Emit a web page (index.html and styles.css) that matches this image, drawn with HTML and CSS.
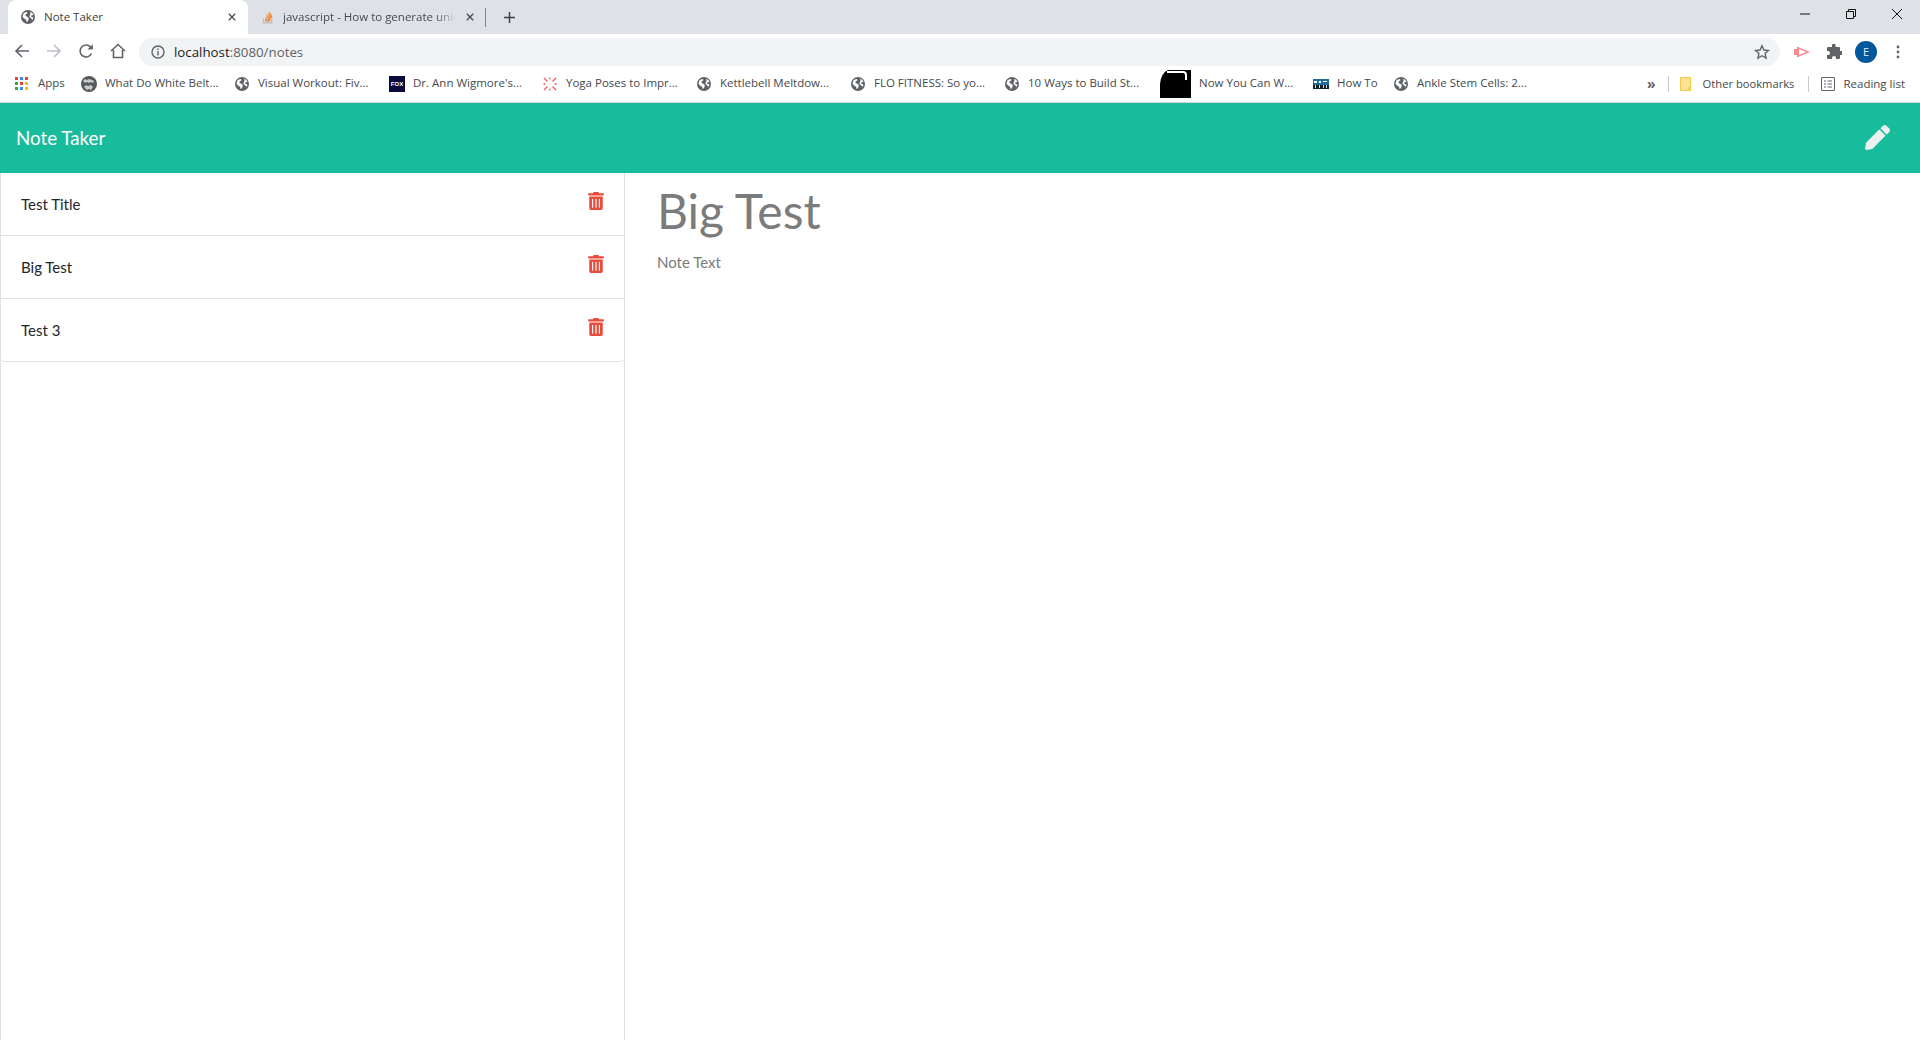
FILE: index.html
```html
<!DOCTYPE html>
<html lang="en">
<head>
    <meta charset="UTF-8">
    <meta name="viewport" content="width=device-width, initial-scale=1.0">
    <title>Note Taker</title>
    <link rel="stylesheet" href="styles.css">
</head>
<body>
    <svg class="defs" width="0" height="0">
        <symbol id="globe" viewBox="0 0 16 16">
            <circle cx="8" cy="8" r="8" fill="#5f6368"/>
            <path fill="#fff" d="M3 3.500 6.500 2.200l1 1.300-2 1.700-.5 1.500 2.500 1.200L9 9.500l-.7 2.500-1.800 2-.7-3-2.300-1.200L1.700 7.600zM10.500 2l2.500 1.500 1.300 2.300-2.300.2-.5 1.600 2.800 1-1.200 2.900-1.800-2.300-1.600-1.200.4-2.200L11 4.300z"/>
        </symbol>
        <symbol id="trash" viewBox="0 0 448 512">
            <path fill="currentColor" d="M32 464a48 48 0 0 0 48 48h288a48 48 0 0 0 48-48V128H32zm272-256a16 16 0 0 1 32 0v224a16 16 0 0 1-32 0zm-96 0a16 16 0 0 1 32 0v224a16 16 0 0 1-32 0zm-96 0a16 16 0 0 1 32 0v224a16 16 0 0 1-32 0zM432 32H312l-9.400-18.700A24 24 0 0 0 281.100 0H166.800a23.720 23.720 0 0 0-21.400 13.300L136 32H16A16 16 0 0 0 0 48v32a16 16 0 0 0 16 16h416a16 16 0 0 0 16-16V48a16 16 0 0 0-16-16z"/>
        </symbol>
    </svg>

    <!-- browser chrome -->
    <div class="tabstrip">
        <div class="tab tab-active">
            <svg class="fav"><use href="#globe"/></svg>
            <span class="tab-title">Note Taker</span>
            <svg class="tab-close" viewBox="0 0 10 10"><path d="M1 1l8 8M9 1l-8 8"/></svg>
        </div>
        <div class="tab">
            <svg class="fav" viewBox="0 0 14 16">
                <path fill="#bcbbbb" d="M1 10h1.400v4h8.200v-4H12v5.400H1z"/>
                <path fill="#f48024" d="M3.400 12h6.200v1.200H3.400zM3.600 10.200l6.100.6-.1 1.200-6.100-.6zM4.200 8l5.900 1.600-.3 1.200-5.900-1.600zM5.400 5.800l5.300 3-.6 1-5.300-3zM7.200 3.800l4.200 4.400-.9.8-4.200-4.400zM9.400 2.400l2.600 5.400-1.100.5-2.600-5.400z"/>
            </svg>
            <span class="tab-title tab-fade">javascript - How to generate uniq</span>
            <svg class="tab-close" viewBox="0 0 10 10"><path d="M1 1l8 8M9 1l-8 8"/></svg>
        </div>
        <div class="tab-sep"></div>
        <svg class="new-tab" viewBox="0 0 12 12"><path d="M6 0v12M0 6h12"/></svg>
        <div class="window-btns">
            <svg viewBox="0 0 10 10"><path d="M0 5h10"/></svg>
            <svg viewBox="0 0 10 10"><path d="M.5 2.500h7v7h-7zM2.500 2.500v-2h7v7h-2"/></svg>
            <svg viewBox="0 0 10 10"><path d="M0 0l10 10M10 0L0 10"/></svg>
        </div>
    </div>

    <div class="toolbar">
        <svg class="tool" viewBox="0 0 16 16"><path d="M15 8H2M8 2 2 8l6 6"/></svg>
        <svg class="tool tool-off" viewBox="0 0 16 16"><path d="M1 8h13M8 2l6 6-6 6"/></svg>
        <svg class="tool" viewBox="0 0 16 16"><path d="M13.500 10.500A6 6 0 1 1 12.400 3.800L14 5.400"/><path class="solid" d="M14.800 1.200v5.400H9.400z"/></svg>
        <svg class="tool tool-home" viewBox="0 0 16 16"><path d="M1 8 8 1.500 15 8M3.500 7v7.500h9V7"/></svg>
        <div class="omnibox">
            <svg class="info" viewBox="0 0 14 14"><circle cx="7" cy="7" r="6"/><path d="M7 6v4.400M7 3.400v1.500"/></svg>
            <span class="url">localhost<span class="url-rest">:8080/notes</span></span>
            <svg class="star" viewBox="0 0 16 16"><path d="m8 1.800 1.900 4.200 4.600.5-3.400 3 1 4.500L8 11.700 3.900 14l1-4.500-3.400-3 4.600-.5z"/></svg>
        </div>
        <svg class="ext" viewBox="0 0 16 14"><path fill="#ff8a8f" fill-rule="evenodd" d="M0 4h3V1.500L16 7 3 12.500V10H0zM5 4v6l7-3z"/></svg>
        <svg class="puzzle" viewBox="0 0 16 16"><path fill="#5f6368" d="M6 1.500a1.800 1.800 0 0 1 3.600 0V3H13a1 1 0 0 1 1 1v3h1a2 2 0 0 1 0 4h-1v3a1 1 0 0 1-1 1h-3v-1a2 2 0 0 0-4 0v1H2a1 1 0 0 1-1-1v-3h1a2 2 0 0 0 0-4H1V4a1 1 0 0 1 1-1h4z"/></svg>
        <div class="avatar">E</div>
        <svg class="dots" viewBox="0 0 4 14"><circle cx="2" cy="2" r="1.400"/><circle cx="2" cy="7" r="1.400"/><circle cx="2" cy="12" r="1.400"/></svg>
    </div>

    <div class="bookmarks">
        <div class="bm bm-apps">
            <svg class="ic-apps" viewBox="0 0 13 13">
                <rect width="3" height="3" fill="#ea4335"/><rect x="5" width="3" height="3" fill="#4285f4"/><rect x="10" width="3" height="3" fill="#ea4335"/>
                <rect y="5" width="3" height="3" fill="#34a853"/><rect x="5" y="5" width="3" height="3" fill="#ea4335"/><rect x="10" y="5" width="3" height="3" fill="#fbbc04"/>
                <rect y="10" width="3" height="3" fill="#34a853"/><rect x="5" y="10" width="3" height="3" fill="#4285f4"/><rect x="10" y="10" width="3" height="3" fill="#fbbc04"/>
            </svg>
            <span>Apps</span>
        </div>
        <div class="bm">
            <svg class="ic-belt" viewBox="0 0 16 16"><circle cx="8" cy="8" r="8" fill="#55595c"/><path fill="#c9c9c9" d="M2 5l2-2 2 1 2-1 3 1 2 1-1 2-2-1-2 1-2-1-2 1zM3 11l2-2 2 1 3-1 2 2-2 3-2-1-2 1z"/></svg>
            <span>What Do White Belt...</span>
        </div>
        <div class="bm"><svg class="ic"><use href="#globe"/></svg><span>Visual Workout: Fiv...</span></div>
        <div class="bm">
            <div class="ic-fox">FOX</div>
            <span>Dr. Ann Wigmore's...</span>
        </div>
        <div class="bm">
            <svg class="ic" viewBox="0 0 14 14"><path fill="none" stroke="#ee5a5a" stroke-width="1.300" d="M1 1l3.500 3.500M13 1 9.500 4.500M1 13l3.500-3.500M13 13 9.500 9.500M7 .5v2M7 11.500v2M.5 7h2M11.500 7h2"/></svg>
            <span>Yoga Poses to Impr...</span>
        </div>
        <div class="bm"><svg class="ic"><use href="#globe"/></svg><span>Kettlebell Meltdow...</span></div>
        <div class="bm"><svg class="ic"><use href="#globe"/></svg><span>FLO FITNESS: So yo...</span></div>
        <div class="bm"><svg class="ic"><use href="#globe"/></svg><span>10 Ways to Build St...</span></div>
        <div class="bm">
            <svg class="ic-black" viewBox="0 0 32 28"><rect width="32" height="28"/><path fill="#fff" d="M0 0h9Q2 3 1 14V28H0z"/><path fill="none" stroke="#fff" stroke-width="2" d="M8 2h16q3 0 3 3v5"/></svg>
            <span>Now You Can W...</span>
        </div>
        <div class="bm bm-howto">
            <svg class="ic-howto" viewBox="0 0 16 10"><rect width="16" height="10" fill="#1f6c97"/><path fill="#fff" d="M1 2h3v2H1zM6 2h2v2H6zM10 2h4v1h-4z"/><path fill="#12222c" d="M0 6h16v4H0z"/><path fill="#cfe2ee" d="M2 6h1v3H2zM6 6h1v3H6zM10 6h1v3h-1zM13 6h1v3h-1z"/></svg>
            <span>How To</span>
        </div>
        <div class="bm"><svg class="ic"><use href="#globe"/></svg><span>Ankle Stem Cells: 2...</span></div>
        <div class="bm-end">
            <span class="more">&raquo;</span>
            <div class="bm-sep"></div>
            <svg class="ic-folder" viewBox="0 0 11 14"><path fill="#fde293" stroke="#f2c94c" d="M.5.5h10v13H.5z"/><path fill="#f2c94c" d="M8.500 10h2v3.500h-2z"/></svg>
            <span class="other">Other bookmarks</span>
            <div class="bm-sep bm-sep-2"></div>
            <svg class="ic-reading" viewBox="0 0 14 14"><path d="M.5.5h13v13H.5zM3 4h2M3 7h2M3 10h2M6.500 4H11M6.500 7H11M6.500 10H11"/></svg>
            <span>Reading list</span>
        </div>
    </div>

    <!-- the app -->
    <nav class="navbar">
        <a class="brand">Note Taker</a>
        <svg class="pen" viewBox="0 0 512 512"><path fill="currentColor" d="M497.900 142.100l-46.100 46.100c-4.700 4.700-12.300 4.700-17 0l-111-111c-4.700-4.700-4.700-12.300 0-17l46.100-46.100c18.700-18.700 49.100-18.700 67.900 0l60.100 60.100c18.800 18.700 18.800 49.100 0 67.900zM284.200 99.800 21.600 362.400.4 483.900c-2.900 16.400 11.400 30.600 27.800 27.800l121.500-21.300 262.600-262.600c4.700-4.700 4.700-12.300 0-17l-111-111c-4.800-4.700-12.400-4.700-17.100 0z"/></svg>
    </nav>

    <div class="main">
        <div class="sidebar">
            <ul class="note-list">
                <li class="note-item"><span>Test Title</span><svg class="delete"><use href="#trash"/></svg></li>
                <li class="note-item"><span>Big Test</span><svg class="delete"><use href="#trash"/></svg></li>
                <li class="note-item"><span>Test 3</span><svg class="delete"><use href="#trash"/></svg></li>
            </ul>
        </div>
        <div class="note">
            <h1 class="note-title">Big Test</h1>
            <p class="note-text">Note Text</p>
        </div>
    </div>
</body>
</html>
```

FILE: styles.css
```css
* {
    box-sizing: border-box;
}
html, body {
    height: 100%;
}
body {
    margin: 0;
    display: flex;
    flex-direction: column;
    overflow: hidden;
    font-family: "Open Sans", "Noto Sans", sans-serif;
    background: #fff;
}
.defs {
    position: absolute;
}

/* tabs */
.tabstrip {
    height: 34px;
    flex: none;
    display: flex;
    align-items: stretch;
    padding-left: 8px;
    background: #dee1e6;
}
.tab {
    width: 240px;
    display: flex;
    align-items: center;
    padding: 0 12px 0 13px;
    font-size: 11.5px;
    line-height: 32px;
    color: #45494d;
}
.tab + .tab {
    width: 238px;
}
.tab + .tab .fav {
    margin-right: 8px;
}
.tab-active {
    background: #fff;
    border-radius: 8px 8px 0 0;
    color: #3c4043;
}
.fav {
    width: 14px;
    height: 14px;
    flex: none;
    margin-right: 9px;
}
.tab-title {
    flex: 1;
    white-space: nowrap;
    overflow: hidden;
}
.tab-fade {
    -webkit-mask-image: linear-gradient(to right, #000 88%, transparent);
    mask-image: linear-gradient(to right, #000 88%, transparent);
}
.tab-close {
    width: 8px;
    height: 8px;
    flex: none;
    margin-left: 10px;
    fill: none;
    stroke: #45494d;
    stroke-width: 1.6;
}
.tab-sep {
    width: 1px;
    height: 19px;
    margin: 8px 0 0 -1px;
    background: #80868b;
}
.new-tab {
    width: 11px;
    height: 11px;
    margin: 12px 0 0 18px;
    fill: none;
    stroke: #3c4043;
    stroke-width: 1.6;
}
.window-btns {
    margin-left: auto;
    display: flex;
    gap: 36px;
    padding: 9px 18px 0 0;
}
.window-btns svg {
    width: 10px;
    height: 10px;
    fill: none;
    stroke: #111;
    stroke-width: 1;
}

/* toolbar */
.toolbar {
    height: 32px;
    flex: none;
    display: flex;
    align-items: center;
    padding: 2px 0 0 14px;
    background: #fff;
}
.tool {
    width: 16px;
    height: 16px;
    flex: none;
    margin-right: 16px;
    fill: none;
    stroke: #5f6368;
    stroke-width: 1.6;
}
.tool-off {
    stroke: #bdc1c6;
}
.tool .solid {
    fill: #5f6368;
    stroke: none;
}
.tool-home {
    margin-right: 13px;
}
.omnibox {
    width: 1641px;
    height: 28px;
    margin-top: 2px;
    flex: none;
    display: flex;
    align-items: center;
    padding: 0 10px 0 12px;
    border-radius: 14px;
    background: #f1f3f4;
}
.info {
    width: 14px;
    height: 14px;
    fill: none;
    stroke: #5f6368;
    stroke-width: 1.4;
}
.url {
    margin-left: 9px;
    font-size: 13.3px;
    color: #202124;
}
.url-rest {
    color: #5f6368;
}
.star {
    width: 16px;
    height: 16px;
    margin-left: auto;
    margin-right: 0;
    fill: none;
    stroke: #5f6368;
    stroke-width: 1.4;
}
.ext {
    width: 16px;
    height: 14px;
    margin: 2px 0 0 14px;
}
.puzzle {
    width: 16px;
    height: 16px;
    margin: 2px 0 0 16px;
}
.avatar {
    width: 22px;
    height: 22px;
    margin: 2px 0 0 13px;
    border-radius: 50%;
    background: #01579b;
    color: #e8eef5;
    font-size: 11px;
    line-height: 22px;
    text-align: center;
}
.dots {
    width: 4px;
    height: 14px;
    margin: 2px 0 0 19px;
    fill: #5f6368;
}

/* bookmarks bar */
.bookmarks {
    height: 37px;
    flex: none;
    display: flex;
    align-items: center;
    padding: 0 15px 1px;
    border-bottom: 1px solid #d3d4d6;
    font-size: 11.5px;
    line-height: 14px;
    color: #45494d;
    white-space: nowrap;
}
.bm {
    width: 154px;
    flex: none;
    display: flex;
    align-items: center;
}
.bm span {
    position: relative;
    top: -1px;
}
.bm-apps {
    width: 66px;
}
.bm-howto {
    width: 81px;
}
.ic, .ic-belt {
    width: 14px;
    height: 14px;
    flex: none;
    margin-right: 9px;
}
.ic-belt {
    width: 16px;
    height: 16px;
    margin-right: 8px;
}
.ic-apps {
    width: 13px;
    height: 13px;
    margin-right: 10px;
}
.ic-fox {
    width: 16px;
    height: 16px;
    margin-right: 8px;
    background: #0a0a3c;
    color: #fff;
    font: bold 6px/16px "Liberation Sans", sans-serif;
    text-align: center;
}
.ic-black {
    width: 32px;
    height: 28px;
    margin-right: 8px;
}
.ic-howto {
    width: 16px;
    height: 10px;
    margin-right: 8px;
}
.bm-end {
    display: flex;
    align-items: center;
    margin-left: auto;
}
.more {
    font-size: 14px;
    font-weight: 700;
    color: #5f6368;
    margin-right: 12px;
}
.bm-sep {
    width: 1px;
    height: 16px;
    background: #c9cbce;
    margin-right: 11px;
}
.bm-sep-2 {
    margin: 0 12px 0 14px;
}
.ic-folder {
    width: 11px;
    height: 14px;
    margin-right: 12px;
}
.other {
    font-size: 11.2px;
}
.ic-reading {
    width: 14px;
    height: 14px;
    margin-right: 8px;
    fill: none;
    stroke: #5f6368;
    stroke-width: 1;
}

/* note taker page */
.navbar {
    height: 70px;
    flex: none;
    display: flex;
    align-items: center;
    justify-content: space-between;
    padding: 0 30px 2px 16px;
    background: #18bc9c;
    font-family: Lato, sans-serif;
}
.brand {
    font-size: 18.75px;
    color: #fff;
}
.pen {
    width: 25px;
    height: 25px;
    color: #ecf0f1;
}
.main {
    flex: 1;
    display: flex;
    font-family: Lato, sans-serif;
}
.sidebar {
    width: 625px;
    flex: none;
    border-left: 1px solid #dee2e6;
    border-right: 1px solid #dee2e6;
}
.note-list {
    list-style: none;
    margin: 0;
    padding: 0;
}
.note-item {
    height: 63px;
    display: flex;
    justify-content: space-between;
    padding: 22px 20px 0 20px;
    border-bottom: 1px solid #dee2e6;
    font-size: 15px;
    color: #212529;
}
.note-item:last-child {
    border-radius: 0 0 4px 4px;
}
.delete {
    width: 16px;
    height: 18px;
    margin-top: -3px;
    color: #e74c3c;
}
.note {
    flex: 1;
    padding: 9px 0 0 32px;
    color: #7b7b7b;
}
.note-title {
    margin: 0;
    font-size: 48px;
    font-weight: 400;
    line-height: 1.2;
}
.note-text {
    margin: 13px 0 0;
    font-size: 15px;
}
```
